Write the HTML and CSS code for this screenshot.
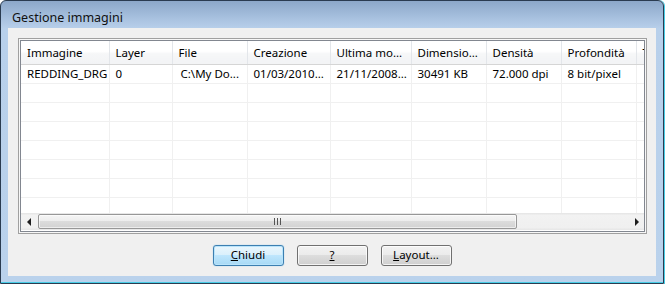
FILE: index.html
```html
<!DOCTYPE html>
<html>
<head>
	<title>Gestione immagini</title>
	<link rel="stylesheet" href="styles.css">
</head>
<body>
	<div class="window">
		<div class="titlebar">Gestione immagini</div>
		<div class="client">
			<div class="listframe">
				<div class="listview">
					<div class="gridarea">
						<table class="list">
							<colgroup>
								<col style="width:88px"><col style="width:63px"><col style="width:75px">
								<col style="width:83px"><col style="width:81px"><col style="width:75px">
								<col style="width:75px"><col style="width:75px"><col style="width:75px">
							</colgroup>
							<thead>
								<tr>
									<th>Immagine</th>
									<th>Layer</th>
									<th>File</th>
									<th>Creazione</th>
									<th>Ultima mo...</th>
									<th>Dimensio...</th>
									<th>Densità</th>
									<th>Profondità</th>
									<th>Tipo</th>
								</tr>
							</thead>
							<tbody>
								<tr>
									<td>REDDING_DRG</td>
									<td>0</td>
									<td class="path">C:\My Do...</td>
									<td>01/03/2010...</td>
									<td>21/11/2008...</td>
									<td>30491 KB</td>
									<td>72.000 dpi</td>
									<td>8 bit/pixel</td>
									<td></td>
								</tr>
								<tr><td></td><td></td><td></td><td></td><td></td><td></td><td></td><td></td><td></td></tr>
								<tr><td></td><td></td><td></td><td></td><td></td><td></td><td></td><td></td><td></td></tr>
								<tr><td></td><td></td><td></td><td></td><td></td><td></td><td></td><td></td><td></td></tr>
								<tr><td></td><td></td><td></td><td></td><td></td><td></td><td></td><td></td><td></td></tr>
								<tr><td></td><td></td><td></td><td></td><td></td><td></td><td></td><td></td><td></td></tr>
								<tr><td></td><td></td><td></td><td></td><td></td><td></td><td></td><td></td><td></td></tr>
								<tr><td></td><td></td><td></td><td></td><td></td><td></td><td></td><td></td><td></td></tr>
							</tbody>
						</table>
					</div>
					<div class="hscroll">
						<div class="sbtn"><span class="arrow-left"></span></div>
						<div class="track">
							<div class="thumb"><span class="grip"></span></div>
						</div>
						<div class="sbtn"><span class="arrow-right"></span></div>
					</div>
				</div>
			</div>
			<div class="buttons">
				<div class="btn default"><u>C</u>hiudi</div>
				<div class="btn"><u>?</u></div>
				<div class="btn"><u>L</u>ayout...</div>
			</div>
		</div>
	</div>
</body>
</html>
```

FILE: styles.css
```css
*{padding:0; margin:0; box-sizing:border-box;}
body{background:#fff; font-family:"Noto Sans","Open Sans",sans-serif; font-size:11.5px; color:#000;}

.window{width:664px; height:284px; border:1px solid #2a3b50; border-radius:6px 6px 0 0;
	background:linear-gradient(#8ca7c9 0, #a9c2e0 18px, #b8d0eb 28px, #bad2ec 100%);
	box-shadow:1px 0 0 #48cde6, inset 0 -1px 0 #48cde6;
	padding:0 7px 7px 7px;}
.titlebar{height:27px; padding:10px 0 0 4px; font-size:12.5px; line-height:14px; color:#111;}
.client{width:648px; height:248px; background:#f0f0f0; padding:10px 9px 0 10px;}

.listframe{height:196px; border:1px solid #a0a0a0; padding:1px; background:#f7f7f7;}
.listview{height:100%; border:1px solid #828790; background:#fff; display:flex; flex-direction:column;}
.gridarea{height:172px; overflow:hidden;}

.list{table-layout:fixed; border-collapse:collapse; width:690px;}
.list th{height:23px; font-weight:normal; text-align:left; padding:0 0 0 6px; white-space:nowrap; overflow:hidden;
	background:linear-gradient(#fff 0, #fff 45%, #f6f7f8 55%, #f2f3f5 100%);
	border-right:1px solid #e3e6ea; border-bottom:1px solid #d5d5d5;}
.list td{height:19px; padding:0 0 0 6px; white-space:nowrap; overflow:hidden;
	border-right:1px solid #f0f0f0; border-bottom:1px solid #f0f0f0;}
.list td.path{padding-left:8px;}

.hscroll{height:17px; display:flex; background:linear-gradient(#e4e4e4 0, #f2f2f2 15%, #f0f0f0 85%, #e6e6e6 100%);}
.sbtn{width:17px; display:flex; align-items:center; justify-content:center;}
.arrow-left{border-right:4px solid #1e1e1e; border-top:4px solid transparent; border-bottom:4px solid transparent; margin-left:-2px;}
.arrow-right{border-left:4px solid #1e1e1e; border-top:4px solid transparent; border-bottom:4px solid transparent; margin-left:2px;}
.track{flex:1; padding:1px 0;}
.thumb{width:479px; height:15px; border:1px solid #979797; border-radius:2px;
	background:linear-gradient(#f5f5f5 0, #ececec 50%, #dcdcdc 50%, #d2d2d2 100%);
	box-shadow:inset 0 0 0 1px rgba(255,255,255,.6);
	display:flex; align-items:center; justify-content:center;}
.grip{width:7px; height:7px; background:repeating-linear-gradient(90deg, #555 0, #555 1px, transparent 1px, transparent 3px);}

.buttons{display:flex; justify-content:center; gap:13px; margin-top:11px; padding-right:1px;}
.btn{width:71px; height:21px; border:1px solid #707070; border-radius:3px; text-align:center; line-height:18px; font-size:11.5px;
	background:linear-gradient(#f2f2f2 0, #ebebeb 50%, #dddddd 50%, #cfcfcf 100%);
	box-shadow:inset 0 0 0 1px rgba(255,255,255,.75);}
.btn.default{border-color:#3c7fb1;
	background:linear-gradient(#eaf6fd 0, #d9f0fc 50%, #bee6fd 50%, #a7d9f5 100%);
	box-shadow:inset 0 0 0 1px #b9e4fb, 0 0 1px #5fb2e6;}
```
